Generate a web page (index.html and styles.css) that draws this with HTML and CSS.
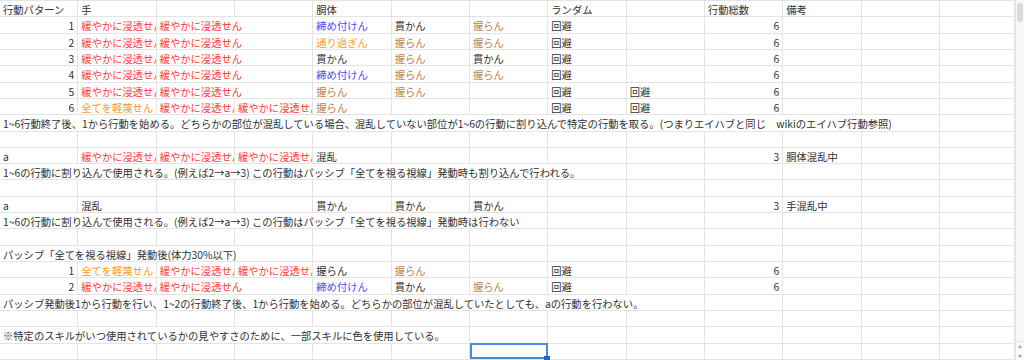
FILE: index.html
```html
<!DOCTYPE html>
<html lang="ja">
<head>
<meta charset="utf-8">
<title>行動パターン</title>
<link rel="stylesheet" href="styles.css">
</head>
<body>
<div class="app">
  <div class="sheet">
    <!-- row 1 -->
    <div class="c">行動パターン</div><div class="c">手</div><div class="c"></div><div class="c"></div><div class="c">胴体</div><div class="c"></div><div class="c"></div><div class="c">ランダム</div><div class="c"></div><div class="c">行動総数</div><div class="c">備考</div><div class="c"></div><div class="c"></div>
    <!-- row 2 -->
    <div class="c r">1</div><div class="c red">緩やかに浸透せん</div><div class="c red sp2">緩やかに浸透せん</div><div class="c blu">締め付けん</div><div class="c">貫かん</div><div class="c brn">握らん</div><div class="c">回避</div><div class="c"></div><div class="c r">6</div><div class="c"></div><div class="c"></div><div class="c"></div>
    <!-- row 3 -->
    <div class="c r">2</div><div class="c red">緩やかに浸透せん</div><div class="c red sp2">緩やかに浸透せん</div><div class="c org">通り過ぎん</div><div class="c brn">握らん</div><div class="c brn">握らん</div><div class="c">回避</div><div class="c"></div><div class="c r">6</div><div class="c"></div><div class="c"></div><div class="c"></div>
    <!-- row 4 -->
    <div class="c r">3</div><div class="c red">緩やかに浸透せん</div><div class="c red sp2">緩やかに浸透せん</div><div class="c">貫かん</div><div class="c brn">握らん</div><div class="c">貫かん</div><div class="c">回避</div><div class="c"></div><div class="c r">6</div><div class="c"></div><div class="c"></div><div class="c"></div>
    <!-- row 5 -->
    <div class="c r">4</div><div class="c red">緩やかに浸透せん</div><div class="c red sp2">緩やかに浸透せん</div><div class="c blu">締め付けん</div><div class="c brn">握らん</div><div class="c brn">握らん</div><div class="c">回避</div><div class="c"></div><div class="c r">6</div><div class="c"></div><div class="c"></div><div class="c"></div>
    <!-- row 6 -->
    <div class="c r">5</div><div class="c red">緩やかに浸透せん</div><div class="c red sp2">緩やかに浸透せん</div><div class="c brn">握らん</div><div class="c brn">握らん</div><div class="c"></div><div class="c">回避</div><div class="c">回避</div><div class="c r">6</div><div class="c"></div><div class="c"></div><div class="c"></div>
    <!-- row 7 -->
    <div class="c r">6</div><div class="c org">全てを軽蔑せん</div><div class="c red">緩やかに浸透せん</div><div class="c red">緩やかに浸透せん</div><div class="c brn">握らん</div><div class="c"></div><div class="c"></div><div class="c">回避</div><div class="c">回避</div><div class="c r">6</div><div class="c"></div><div class="c"></div><div class="c"></div>
    <!-- row 8 -->
    <div class="c sp12">1~6行動終了後、1から行動を始める。どちらかの部位が混乱している場合、混乱していない部位が1~6の行動に割り込んで特定の行動を取る。(つまりエイハブと同じ　wikiのエイハブ行動参照)</div><div class="c"></div>
    <!-- row 9 -->
    <div class="c"></div><div class="c"></div><div class="c"></div><div class="c"></div><div class="c"></div><div class="c"></div><div class="c"></div><div class="c"></div><div class="c"></div><div class="c"></div><div class="c"></div><div class="c"></div><div class="c"></div>
    <!-- row 10 -->
    <div class="c">a</div><div class="c red">緩やかに浸透せん</div><div class="c red">緩やかに浸透せん</div><div class="c red">緩やかに浸透せん</div><div class="c">混乱</div><div class="c"></div><div class="c"></div><div class="c"></div><div class="c"></div><div class="c r">3</div><div class="c">胴体混乱中</div><div class="c"></div><div class="c"></div>
    <!-- row 11 -->
    <div class="c sp8">1~6の行動に割り込んで使用される。(例えば2→a→3) この行動はパッシブ「全てを視る視線」発動時も割り込んで行われる。</div><div class="c"></div><div class="c"></div><div class="c"></div><div class="c"></div><div class="c"></div>
    <!-- row 12 -->
    <div class="c"></div><div class="c"></div><div class="c"></div><div class="c"></div><div class="c"></div><div class="c"></div><div class="c"></div><div class="c"></div><div class="c"></div><div class="c"></div><div class="c"></div><div class="c"></div><div class="c"></div>
    <!-- row 13 -->
    <div class="c">a</div><div class="c">混乱</div><div class="c"></div><div class="c"></div><div class="c">貫かん</div><div class="c">貫かん</div><div class="c">貫かん</div><div class="c"></div><div class="c"></div><div class="c r">3</div><div class="c">手混乱中</div><div class="c"></div><div class="c"></div>
    <!-- row 14 -->
    <div class="c sp7">1~6の行動に割り込んで使用される。(例えば2→a→3) この行動はパッシブ「全てを視る視線」発動時は行わない</div><div class="c"></div><div class="c"></div><div class="c"></div><div class="c"></div><div class="c"></div><div class="c"></div>
    <!-- row 15 -->
    <div class="c"></div><div class="c"></div><div class="c"></div><div class="c"></div><div class="c"></div><div class="c"></div><div class="c"></div><div class="c"></div><div class="c"></div><div class="c"></div><div class="c"></div><div class="c"></div><div class="c"></div>
    <!-- row 16 -->
    <div class="c sp4">パッシブ「全てを視る視線」発動後(体力30%以下)</div><div class="c"></div><div class="c"></div><div class="c"></div><div class="c"></div><div class="c"></div><div class="c"></div><div class="c"></div><div class="c"></div><div class="c"></div>
    <!-- row 17 -->
    <div class="c r">1</div><div class="c org">全てを軽蔑せん</div><div class="c red">緩やかに浸透せん</div><div class="c red">緩やかに浸透せん</div><div class="c">握らん</div><div class="c brn">握らん</div><div class="c"></div><div class="c">回避</div><div class="c"></div><div class="c r">6</div><div class="c"></div><div class="c"></div><div class="c"></div>
    <!-- row 18 -->
    <div class="c r">2</div><div class="c red">緩やかに浸透せん</div><div class="c red sp2">緩やかに浸透せん</div><div class="c blu">締め付けん</div><div class="c">貫かん</div><div class="c brn">握らん</div><div class="c">回避</div><div class="c"></div><div class="c r">6</div><div class="c"></div><div class="c"></div><div class="c"></div>
    <!-- row 19 -->
    <div class="c sp9">パッシブ発動後1から行動を行い、1~2の行動終了後、1から行動を始める。どちらかの部位が混乱していたとしても、aの行動を行わない。</div><div class="c"></div><div class="c"></div><div class="c"></div><div class="c"></div>
    <!-- row 20 -->
    <div class="c"></div><div class="c"></div><div class="c"></div><div class="c"></div><div class="c"></div><div class="c"></div><div class="c"></div><div class="c"></div><div class="c"></div><div class="c"></div><div class="c"></div><div class="c"></div><div class="c"></div>
    <!-- row 21 -->
    <div class="c sp6">※特定のスキルがいつ使用されているかの見やすさのために、一部スキルに色を使用している。</div><div class="c"></div><div class="c"></div><div class="c"></div><div class="c"></div><div class="c"></div><div class="c"></div><div class="c"></div>
    <!-- row 22 -->
    <div class="c"></div><div class="c"></div><div class="c"></div><div class="c"></div><div class="c"></div><div class="c"></div><div class="c sel"></div><div class="c"></div><div class="c"></div><div class="c"></div><div class="c"></div><div class="c"></div><div class="c"></div>
    <!-- row 23 -->
    <div class="c"></div><div class="c"></div><div class="c"></div><div class="c"></div><div class="c"></div><div class="c"></div><div class="c"></div><div class="c"></div><div class="c"></div><div class="c"></div><div class="c"></div><div class="c"></div><div class="c"></div>
  </div>
  <div class="vscroll">
    <div class="thumb"></div>
    <div class="track"></div>
    <div class="arrows">
      <div class="arrow up"></div>
      <div class="arrow down"></div>
    </div>
  </div>
</div>
</body>
</html>
```
FILE: styles.css
```css
* { box-sizing: border-box; }

html, body {
  margin: 0;
  padding: 0;
  background: #ffffff;
  overflow: hidden;
}

body {
  font-family: "Noto Sans CJK JP", "Noto Sans", sans-serif;
  font-size: 10.3px;
  color: #303030;
}

.app {
  display: flex;
  height: 360px;
}

.sheet {
  flex: 1;
  display: grid;
  grid-template-columns: repeat(12, 78.33px) 1fr;
  grid-auto-rows: 16.32px;
  align-content: start;
  overflow: hidden;
  border-top: 1px solid #e4e4e4;
}

.c {
  border-right: 1px solid #e4e4e4;
  border-bottom: 1px solid #e4e4e4;
  padding: 1px 3px 0;
  white-space: nowrap;
  overflow: hidden;
  line-height: 15px;
}

.r { text-align: right; }

.red { color: #ff3838; }
.org { color: #ff9a22; }
.brn { color: #b8804a; }
.blu { color: #4848ff; }

.sp2 { grid-column: span 2; }
.sp4 { grid-column: span 4; }
.sp6 { grid-column: span 6; }
.sp7 { grid-column: span 7; }
.sp8 { grid-column: span 8; }
.sp9 { grid-column: span 9; }
.sp12 { grid-column: span 12; }

.sel {
  position: relative;
  overflow: visible;
}

.sel::before {
  content: "";
  position: absolute;
  left: 0;
  top: -1px;
  right: -1px;
  bottom: 0;
  border: 2px solid #4a8ae6;
}

.sel::after {
  content: "";
  position: absolute;
  right: -3px;
  bottom: -3px;
  width: 6px;
  height: 6px;
  background: #1c63d4;
}

.vscroll {
  width: 9px;
  flex: none;
  border-left: 1px solid #e2e2e2;
  background: #f8f8f8;
  display: flex;
  flex-direction: column;
}

.thumb {
  margin: 3px 1px 0;
  height: 19px;
  background: #dadada;
  border-radius: 3px;
}

.track { flex: 1; }

.arrows {
  border-top: 1px solid #e6e6e6;
  padding: 3px 0 2px;
  display: flex;
  flex-direction: column;
  align-items: center;
  gap: 7px;
}

.arrow {
  width: 0;
  height: 0;
  border-left: 2.5px solid transparent;
  border-right: 2.5px solid transparent;
}

.arrow.up { border-bottom: 3px solid #a0a0a0; }
.arrow.down { border-top: 3px solid #a0a0a0; }
```
